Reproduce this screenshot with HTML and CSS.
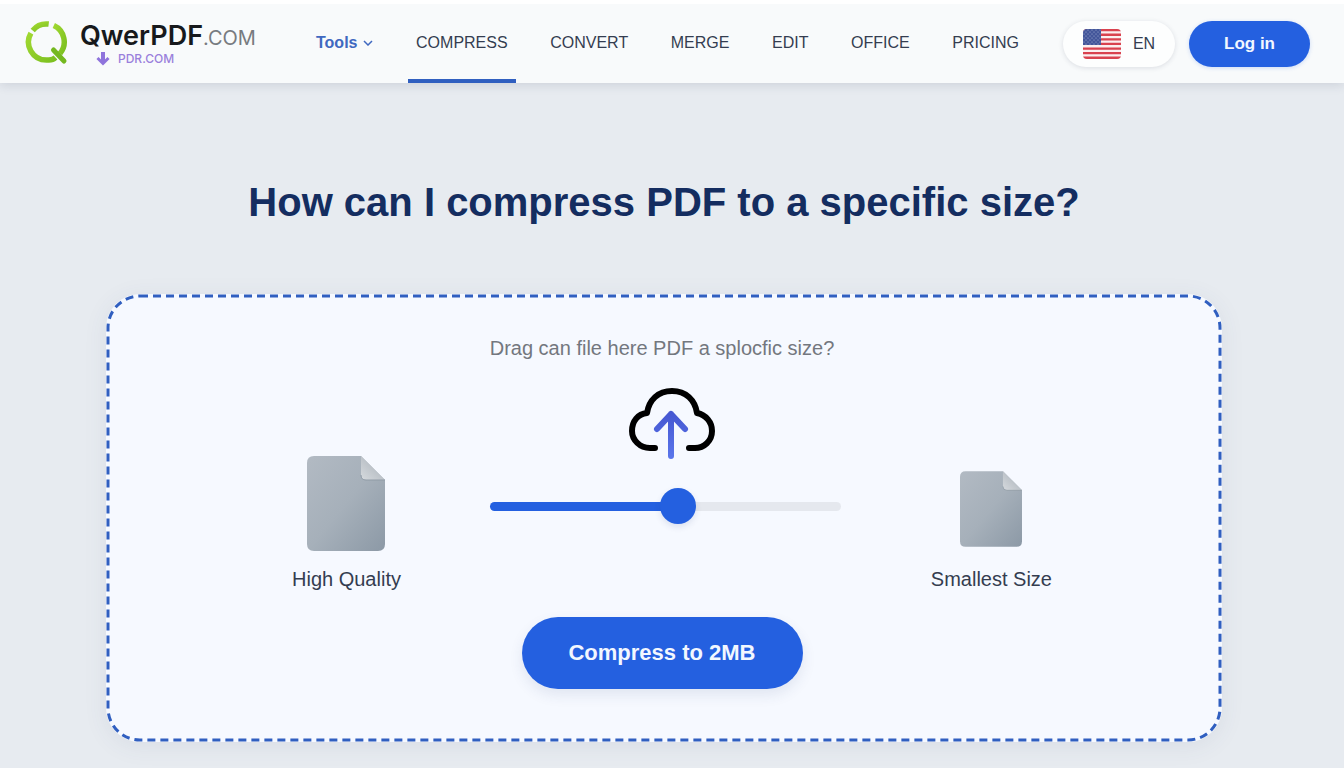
FILE: index.html
```html
<!DOCTYPE html>
<html lang="en">
<head>
    <meta charset="UTF-8">
    <meta name="viewport" content="width=device-width, initial-scale=1.0">
    <title>QwerPDF - Compress PDF</title>
    <link rel="stylesheet" href="styles.css">
</head>
<body>
    <header class="header">
        <a class="logo" href="#">
            <svg class="logo-mark" viewBox="0 0 44 46" aria-hidden="true">
                <defs>
                    <linearGradient id="green" x1="0" y1="0" x2="1" y2="1">
                        <stop offset="0" stop-color="#a0d831"/>
                        <stop offset="1" stop-color="#7cc020"/>
                    </linearGradient>
                </defs>
                <g fill="none" stroke="url(#green)" stroke-width="5.500">
                    <path d="M8.700 10.400A18 18 0 0 1 24.700 4.100"/>
                    <path d="M29.800 5.600A18 18 0 0 1 36 33.500"/>
                    <path d="M31.500 37.600Q29 40 25 40H22.500A18 18 0 0 1 6.900 13"/>
                    <path d="M29.500 30L40 41" stroke="#74b81f" stroke-linecap="round" stroke-width="5"/>
                </g>
            </svg>
            <span class="logo-text">
                <span class="logo-name">QwerPDF<span class="logo-tld">.COM</span></span>
                <span class="logo-sub">
                    <svg viewBox="0 0 14 14" aria-hidden="true">
                        <path d="M7 0V10" stroke="#8f74dc" stroke-width="4"/>
                        <path d="M1.500 6L7 11.500L12.500 6" fill="none" stroke="#8f74dc" stroke-width="3"/>
                    </svg>
                    PDR.COM
                </span>
            </span>
        </a>

        <nav class="nav">
            <button class="nav-tools" type="button">
                Tools
                <svg viewBox="0 0 10 6" aria-hidden="true"><path d="M1 1L5 5L9 1" fill="none" stroke="currentColor" stroke-width="1.500"/></svg>
            </button>
            <a class="active" href="#">COMPRESS</a>
            <a href="#">CONVERT</a>
            <a href="#">MERGE</a>
            <a href="#">EDIT</a>
            <a href="#">OFFICE</a>
            <a href="#">PRICING</a>
        </nav>

        <div class="actions">
            <button class="lang-button" type="button">
                <svg class="flag" viewBox="0 0 38 30" aria-hidden="true">
                    <defs>
                        <clipPath id="flagClip"><rect width="38" height="30" rx="4"/></clipPath>
                        <pattern id="stars" width="4" height="4" patternUnits="userSpaceOnUse">
                            <circle cx="1" cy="1" r="0.600" fill="#a9b4d6"/>
                            <circle cx="3" cy="3" r="0.600" fill="#a9b4d6"/>
                        </pattern>
                    </defs>
                    <g clip-path="url(#flagClip)">
                        <rect width="38" height="30" fill="#fbeff0"/>
                        <path d="M0 1.150H38M0 5.750H38M0 10.350H38M0 14.950H38M0 19.550H38M0 24.150H38M0 28.750H38" stroke="#d9424f" stroke-width="2.300"/>
                        <rect width="18" height="16" fill="#43569a"/>
                        <rect width="18" height="16" fill="url(#stars)"/>
                    </g>
                </svg>
                EN
            </button>
            <button class="login-button" type="button">Log in</button>
        </div>
    </header>

    <main class="main">
        <h1>How can I compress PDF to a specific size?</h1>

        <section class="dropzone">
            <svg class="dropzone-border" aria-hidden="true"><rect width="100%" height="100%" rx="32"/></svg>

            <p class="hint">Drag can file here PDF a splocfic size?</p>

            <div class="compare">
                <div class="file">
                    <svg class="file-large" viewBox="0 0 78 95" aria-hidden="true">
                        <defs>
                            <linearGradient id="paper" x1="0" y1="0" x2="1" y2="1">
                                <stop offset="0" stop-color="#b2bac3"/>
                                <stop offset="0.500" stop-color="#a6b0ba"/>
                                <stop offset="1" stop-color="#8c99a6"/>
                            </linearGradient>
                            <linearGradient id="fold" x1="0" y1="1" x2="0.700" y2="0.300">
                                <stop offset="0" stop-color="#d6dade"/>
                                <stop offset="1" stop-color="#b3bac1"/>
                            </linearGradient>
                        </defs>
                        <path d="M7 0H54L78 24V88Q78 95 71 95H7Q0 95 0 88V7Q0 0 7 0Z" fill="url(#paper)"/>
                        <path d="M54 0L78 24H59Q54 24 54 19Z" fill="url(#fold)"/>
                        <path d="M54 19Q54 24 59 24H78" fill="none" stroke="#909ba6"/>
                    </svg>
                    <span>High Quality</span>
                </div>

                <div class="level">
                    <svg class="cloud" viewBox="0 0 86 74" aria-hidden="true">
                        <defs>
                            <linearGradient id="arrow" gradientUnits="userSpaceOnUse" x1="0" y1="26" x2="0" y2="72">
                                <stop offset="0" stop-color="#4658d2"/>
                                <stop offset="1" stop-color="#5b77ec"/>
                            </linearGradient>
                        </defs>
                        <g fill="none" stroke-width="6" stroke-linecap="round" stroke-linejoin="round">
                            <path d="M26 60H21C11 60 3 52 3 43C3 33 9 26 18 25C20 12 29 3 43 3C57 3 66 12 68 25C77 27 83 34 83 43C83 53 75 60 66 60H60" stroke="#000"/>
                            <path d="M42 68V26M28 41L42 26L56 41" stroke="url(#arrow)" stroke-width="6"/>
                        </g>
                    </svg>
                    <input class="slider" type="range" min="0" max="100" value="54" aria-label="Compression level">
                </div>

                <div class="file">
                    <svg class="file-small" viewBox="0 0 78 95" aria-hidden="true">
                        <path d="M7 0H54L78 24V88Q78 95 71 95H7Q0 95 0 88V7Q0 0 7 0Z" fill="url(#paper)"/>
                        <path d="M54 0L78 24H59Q54 24 54 19Z" fill="url(#fold)"/>
                        <path d="M54 19Q54 24 59 24H78" fill="none" stroke="#909ba6"/>
                    </svg>
                    <span>Smallest Size</span>
                </div>
            </div>

            <button class="compress-button" type="button">Compress to 2MB</button>
        </section>
    </main>

    <script>
        const slider = document.querySelector('.slider');

        function fillTrack() {
            slider.style.setProperty('--fill', slider.value + '%');
        }

        slider.addEventListener('input', fillTrack);
        fillTrack();
    </script>
</body>
</html>
```
FILE: styles.css
```css
:root {
    --primary-color: #2460e0;
    --accent-color: #305fc0;
    --heading-color: #142d60;
    --text-color: #343d50;
    --light-bg: #f8fafb;
}

* {
    margin: 0;
    padding: 0;
    box-sizing: border-box;
}

body {
    font-family: "Liberation Sans", Arial, sans-serif;
    background: #e7ebf0;
    color: var(--text-color);
    min-height: 100vh;
}

button {
    font-family: inherit;
    border: none;
    cursor: pointer;
}

a {
    color: inherit;
    text-decoration: none;
}

/* header */
.header {
    display: flex;
    align-items: center;
    height: 83px;
    padding: 0 34px 0 24px;
    background: var(--light-bg);
    border-top: 4px solid #fff;
    box-shadow: 0 2px 10px rgba(40, 50, 80, 0.14);
}

.logo {
    display: flex;
    align-items: center;
    gap: 12px;
    width: 292px;
    padding-bottom: 2px;
}

.logo-mark {
    width: 44px;
    height: 46px;
}

.logo-text {
    display: flex;
    flex-direction: column;
    padding-top: 2px;
    font-family: Inter, sans-serif;
}

.logo-name {
    font-size: 27px;
    line-height: 28px;
    font-weight: 600;
    color: #17191c;
}

.logo-tld {
    font-size: 20px;
    font-weight: 400;
    color: #777b80;
}

.logo-sub {
    display: flex;
    align-items: center;
    gap: 8px;
    padding-left: 16px;
    font-size: 12px;
    line-height: 12px;
    font-weight: 500;
    color: #9a80dc;
}

.logo-sub svg {
    width: 14px;
    height: 14px;
}

.nav {
    flex: 1;
    display: flex;
    justify-content: space-between;
    align-self: stretch;
    font-size: 16px;
}

.nav a,
.nav-tools {
    display: flex;
    align-items: center;
    padding-bottom: 2px;
}

.nav .active {
    padding: 4px 8px 2px;
    margin: 0 -8px;
    border-bottom: 4px solid var(--accent-color);
}

.nav-tools {
    gap: 6px;
    background: none;
    color: #3f68c0;
    font-size: 16px;
    font-weight: 700;
}

.nav-tools svg {
    width: 10px;
    height: 6px;
}

.actions {
    display: flex;
    gap: 14px;
    margin-left: 44px;
}

.lang-button {
    display: flex;
    align-items: center;
    justify-content: center;
    gap: 12px;
    width: 112px;
    height: 46px;
    border-radius: 23px;
    background: #fdfefe;
    color: var(--text-color);
    font-size: 16px;
    box-shadow: 0 1px 5px rgba(40, 50, 80, 0.14);
}

.flag {
    width: 38px;
    height: 30px;
}

.login-button {
    width: 121px;
    height: 46px;
    border-radius: 23px;
    background: var(--primary-color);
    color: #f2f7ff;
    font-size: 17px;
    font-weight: 700;
    box-shadow: 0 1px 4px rgba(36, 96, 224, 0.2);
}

/* main */
.main {
    padding: 95px 122px 26px 106px;
}

h1 {
    color: var(--heading-color);
    font-size: 40px;
    line-height: 48px;
    text-align: center;
    margin-bottom: 68px;
}

.dropzone {
    position: relative;
    display: flex;
    flex-direction: column;
    align-items: center;
    padding: 42px 4px 53px 0;
    background: #f6f9ff;
    border-radius: 34px;
    box-shadow: 0 4px 24px rgba(60, 80, 120, 0.08);
}

.dropzone-border {
    position: absolute;
    inset: 2px;
    width: calc(100% - 4px);
    height: calc(100% - 4px);
    overflow: visible;
    pointer-events: none;
}

.dropzone-border rect {
    fill: none;
    stroke: var(--accent-color);
    stroke-width: 3;
    stroke-dasharray: 8 5;
}

.hint {
    color: #73777e;
    font-size: 20px;
    line-height: 24px;
    margin-bottom: 28px;
}

.compare {
    display: flex;
    justify-content: space-between;
    align-self: stretch;
    padding: 0 166px 0 186px;
    margin-bottom: 26px;
}

.file {
    display: flex;
    flex-direction: column;
    align-items: center;
    justify-content: flex-end;
    font-size: 20px;
    line-height: 24px;
}

.file-large {
    width: 78px;
    height: 95px;
    margin-bottom: 16px;
}

.file-small {
    width: 62px;
    height: 76px;
    margin-bottom: 20px;
}

.level {
    display: flex;
    flex-direction: column;
    align-items: center;
    gap: 26px;
    width: 351px;
    height: 203px;
}

.cloud {
    width: 86px;
    height: 74px;
    margin-left: 12px;
}

.slider {
    appearance: none;
    width: 100%;
    height: 36px;
    background: none;
    cursor: pointer;
}

.slider::-webkit-slider-runnable-track {
    height: 9px;
    border-radius: 5px;
    background: linear-gradient(to right, var(--primary-color) var(--fill), #e5e8ee var(--fill));
}

.slider::-webkit-slider-thumb {
    appearance: none;
    width: 36px;
    height: 36px;
    margin-top: -14px;
    border-radius: 50%;
    background: var(--primary-color);
    box-shadow: 0 3px 6px rgba(36, 60, 120, 0.12);
}

.compress-button {
    width: 281px;
    height: 72px;
    border-radius: 36px;
    background: var(--primary-color);
    color: #f2f7ff;
    font-size: 22px;
    font-weight: 700;
    box-shadow: 0 6px 14px rgba(40, 60, 120, 0.1);
}
```
